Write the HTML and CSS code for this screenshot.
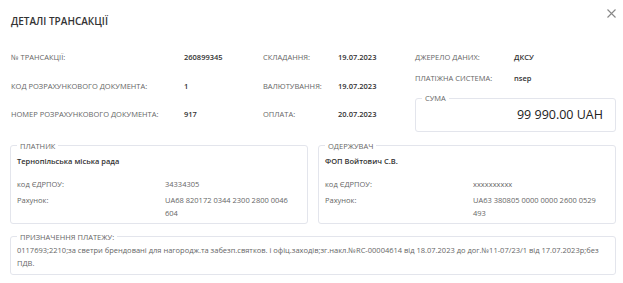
FILE: index.html
```html
<!DOCTYPE html>
<html>
<head>
    <title>Деталі трансакції</title>
    <link rel="stylesheet" href="styles.css">
</head>
<body>
    <div class="dialog">
        <div class="header">
            <h1>ДЕТАЛІ ТРАНСАКЦІЇ</h1>
            <svg class="close" width="9" height="9" viewBox="0 0 9 9">
                <path d="M0.5 0.5 L8.5 8.5 M8.5 0.5 L0.5 8.5" stroke="#888" stroke-width="1.1" fill="none"/>
            </svg>
        </div>

        <div class="summary">
            <div class="info">
                <span class="label">№ ТРАНСАКЦІЇ:</span>
                <span class="value">260899345</span>
                <span class="label">СКЛАДАННЯ:</span>
                <span class="value">19.07.2023</span>

                <span class="label">КОД РОЗРАХУНКОВОГО ДОКУМЕНТА:</span>
                <span class="value">1</span>
                <span class="label">ВАЛЮТУВАННЯ:</span>
                <span class="value">19.07.2023</span>

                <span class="label">НОМЕР РОЗРАХУНКОВОГО ДОКУМЕНТА:</span>
                <span class="value">917</span>
                <span class="label">ОПЛАТА:</span>
                <span class="value">20.07.2023</span>
            </div>
            <div class="side">
                <div class="side-row">
                    <span class="label">ДЖЕРЕЛО ДАНИХ:</span>
                    <span class="value">ДКСУ</span>
                </div>
                <div class="side-row">
                    <span class="label">ПЛАТІЖНА СИСТЕМА:</span>
                    <span class="value">nsep</span>
                </div>
                <fieldset class="box amount">
                    <legend>СУМА</legend>
                    <span>99 990.00 UAH</span>
                </fieldset>
            </div>
        </div>

        <div class="parties">
            <fieldset class="box party">
                <legend>ПЛАТНИК</legend>
                <div class="name">Тернопільська міська рада</div>
                <div class="party-grid">
                    <span>код ЄДРПОУ:</span>
                    <span>34334305</span>
                    <span>Рахунок:</span>
                    <span>UA68 820172 0344 2300 2800 0046 604</span>
                </div>
            </fieldset>
            <fieldset class="box party">
                <legend>ОДЕРЖУВАЧ</legend>
                <div class="name">ФОП Войтович С.В.</div>
                <div class="party-grid">
                    <span>код ЄДРПОУ:</span>
                    <span>xxxxxxxxxx</span>
                    <span>Рахунок:</span>
                    <span>UA63 380805 0000 0000 2600 0529 493</span>
                </div>
            </fieldset>
        </div>

        <fieldset class="box purpose">
            <legend>ПРИЗНАЧЕННЯ ПЛАТЕЖУ:</legend>
            <p>0117693;2210;за светри брендовані для нагородж.та забезп.святков. і офіц.заходів;зг.накл.№RC-00004614 від 18.07.2023 до дог.№11-07/23/1 від 17.07.2023р;без ПДВ.</p>
        </fieldset>
    </div>
</body>
</html>
```

FILE: styles.css
```css
body {
    margin: 0;
    background: #fff;
    font-family: "Open Sans", sans-serif;
    font-size: 7.5px;
    color: #666;
}

.dialog {
    padding: 0 7px 0 10px;
}

.header {
    display: flex;
    justify-content: space-between;
    align-items: center;
    height: 42px;
}

h1 {
    margin: 0 0 0 1px;
    font-size: 10px;
    font-weight: 600;
    color: #333;
}

.close {
    margin-top: -16px;
}

.summary {
    display: flex;
    margin-top: 10px;
}

.info {
    display: grid;
    grid-template-columns: 173px 79px 75px 77px;
    grid-auto-rows: 28.5px;
    padding-left: 1px;
}

.label {
    color: #666;
    white-space: nowrap;
}

.value {
    color: #333;
    font-weight: 600;
}

.side {
    display: flex;
    flex-direction: column;
    flex: 1;
}

.side-row {
    display: flex;
    height: 21px;
}

.side-row .label {
    width: 99px;
}

.box {
    margin: 0;
    border: 1px solid #e3e5ec;
    border-radius: 3px;
    padding: 0 6px;
}

legend {
    padding: 0 3px;
    font-size: 7.5px;
    color: #666;
}

.amount {
    height: 34px;
    display: flex;
    align-items: center;
    justify-content: flex-end;
    padding: 3px 12px 0 6px;
    margin-top: -1px;
}

.amount span {
    font-size: 12.5px;
    font-weight: 500;
    color: #222;
}

.parties {
    display: flex;
    gap: 10px;
    margin-top: 3px;
}

.party {
    flex: 1;
    padding-bottom: 3px;
}

.name {
    font-weight: 600;
    color: #333;
    margin: 5px 0 12px;
}

.party-grid {
    display: grid;
    grid-template-columns: 148px 1fr;
    row-gap: 3px;
    line-height: 13px;
}

.party-grid span:nth-child(even) {
    padding-right: 12px;
}

.purpose {
    margin-top: 8px;
    padding-bottom: 4px;
}

.purpose p {
    margin: 2px 0 0;
    line-height: 13px;
}
```
